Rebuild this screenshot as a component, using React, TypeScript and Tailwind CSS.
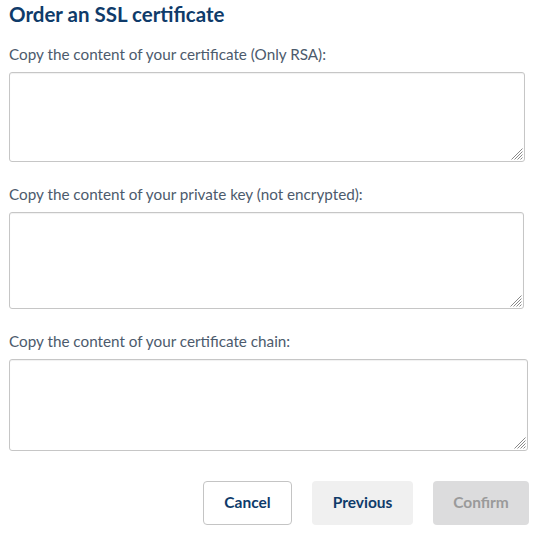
function Grip() {
  return (
    <svg
      className="pointer-events-none absolute bottom-[2px] right-[2px]"
      width="12"
      height="12"
      viewBox="0 0 12 12"
    >
      <g stroke="#8a8a8a" strokeWidth="1">
        <line x1="11.5" y1="0.5" x2="0.5" y2="11.5" />
        <line x1="11.5" y1="3.5" x2="3.5" y2="11.5" />
        <line x1="11.5" y1="6.5" x2="6.5" y2="11.5" />
        <line x1="11.5" y1="9.5" x2="9.5" y2="11.5" />
      </g>
    </svg>
  )
}

function Field({ label, w, h, top }: { label: string; w: string; h: string; top: string }) {
  return (
    <>
      <label className={`${top} block text-[15.25px] leading-[20px] text-[#4c5a6c]`}>{label}</label>
      <div className={`relative mt-[8px] ${w} ${h}`}>
        <textarea className="block h-full w-full resize-none rounded-[3px] border border-[#c6c6c6] shadow-[inset_0_1px_1px_rgba(0,0,0,0.06)] outline-none" />
        <Grip />
      </div>
    </>
  )
}

export default function App() {
  return (
    <div className="min-h-[533px] bg-white pl-[9px] pt-[2px] font-['Lato','Open_Sans',sans-serif]">
      <h2 className="text-[20.5px] leading-[24px] font-bold text-[#0f3b6a]">Order an SSL certificate</h2>

      <Field label="Copy the content of your certificate (Only RSA):" w="w-[516px]" h="h-[90px]" top="mt-[18px]" />
      <Field label="Copy the content of your private key (not encrypted):" w="w-[515px]" h="h-[97px]" top="mt-[22px]" />
      <Field label="Copy the content of your certificate chain:" w="w-[519px]" h="h-[92px]" top="mt-[22px]" />

      <div className="mt-[30px] flex w-[520px] justify-end gap-[20px]">
        <button className="h-[44px] w-[89px] rounded-[4px] border border-[#c4c4c4] bg-white text-[15.5px] font-bold text-[#0f3b6a]">
          Cancel
        </button>
        <button className="h-[44px] w-[101px] rounded-[4px] bg-[#f0f0f0] text-[15.5px] font-bold text-[#0f3b6a]">
          Previous
        </button>
        <button disabled className="h-[44px] w-[96px] rounded-[4px] bg-[#dcdcdd] text-[15.5px] font-bold text-[#9a9a9a]">
          Confirm
        </button>
      </div>
    </div>
  )
}
